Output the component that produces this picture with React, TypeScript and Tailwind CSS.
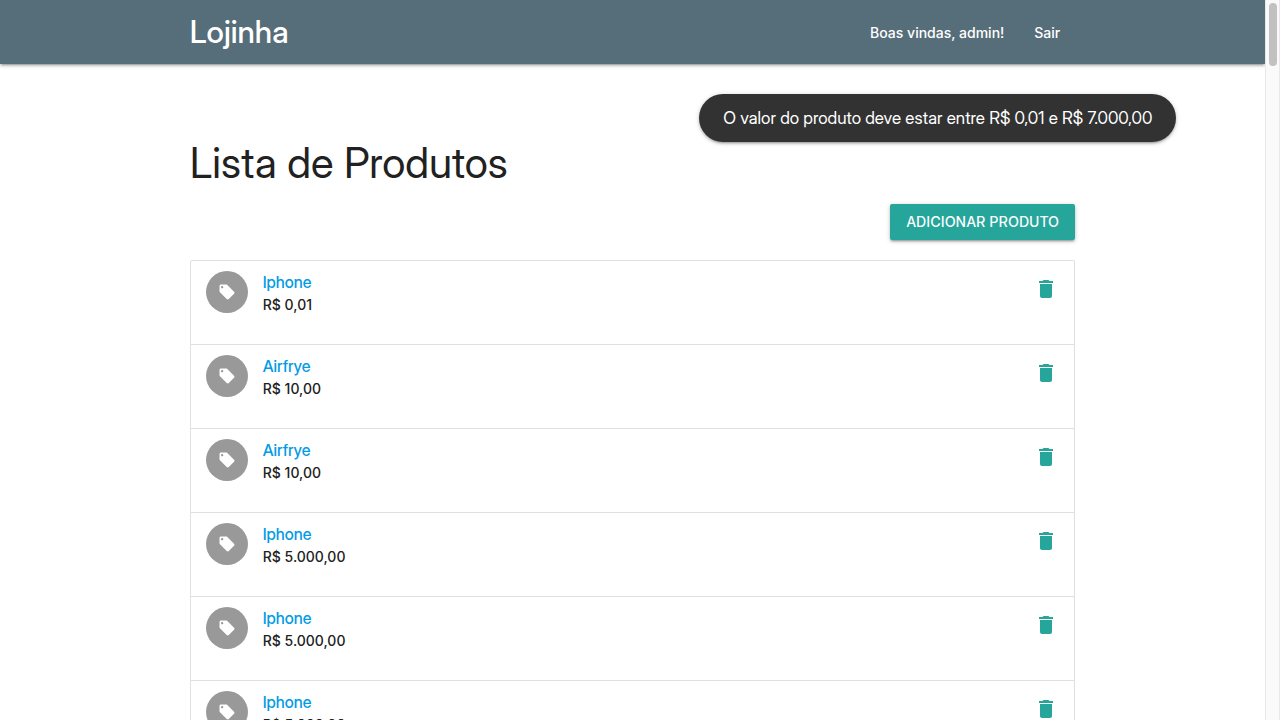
type Product = { name: string; price: string };

const products: Product[] = [
  { name: 'Iphone', price: 'R$ 0,01' },
  { name: 'Airfrye', price: 'R$ 10,00' },
  { name: 'Airfrye', price: 'R$ 10,00' },
  { name: 'Iphone', price: 'R$ 5.000,00' },
  { name: 'Iphone', price: 'R$ 5.000,00' },
  { name: 'Iphone', price: 'R$ 5.000,00' },
];

const textFont = "font-['Inter','Liberation_Sans',sans-serif]";

function TagIcon() {
  return (
    <svg viewBox="0 0 24 24" className="size-[18px] fill-current" aria-hidden="true">
      <path d="M21.41 11.58l-9-9C12.05 2.22 11.55 2 11 2H4c-1.1 0-2 .9-2 2v7c0 .55.22 1.05.59 1.42l9 9c.36.36.86.58 1.41.58.55 0 1.05-.22 1.41-.59l7-7c.37-.36.59-.86.59-1.41 0-.55-.23-1.06-.59-1.42zM5.5 7C4.67 7 4 6.33 4 5.5S4.67 4 5.5 4 7 4.67 7 5.5 6.33 7 5.5 7z" />
    </svg>
  );
}

function TrashIcon() {
  return (
    <svg viewBox="0 0 24 24" className="size-6 fill-current" aria-hidden="true">
      <path d="M6 19c0 1.1.9 2 2 2h8c1.1 0 2-.9 2-2V7H6v12zM19 4h-3.5l-1-1h-5l-1 1H5v2h14V4z" />
    </svg>
  );
}

function ProductRow({ name, price }: Product) {
  return (
    <li className="flex min-h-[84px] items-start border-b border-[#e0e0e0] py-2.5 pr-4 pl-[15px]">
      <span className="flex size-[42px] shrink-0 items-center justify-center rounded-full bg-[#999999] text-white">
        <TagIcon />
      </span>
      <div className="ml-[15px] flex-1">
        <a href="#produto" className="block text-base leading-[22px] font-medium text-[#039be5]">{name}</a>
        <p className={`text-sm leading-6 font-medium ${textFont}`}>{price}</p>
      </div>
      <button type="button" aria-label="Remover produto" className="mt-1.5 text-[#26a69a]">
        <TrashIcon />
      </button>
    </li>
  );
}

const raised =
  'shadow-[0_2px_2px_0_rgba(0,0,0,0.14),0_3px_1px_-2px_rgba(0,0,0,0.12),0_1px_5px_0_rgba(0,0,0,0.2)]';

export default function App() {
  return (
    <div className="flex h-screen overflow-hidden bg-white font-['Inter_Display','Inter','Liberation_Sans',sans-serif] text-[#212121]">
      <div className="relative min-w-0 flex-1 overflow-hidden">
        <nav className={`bg-[#566e79] text-white ${raised}`}>
          <div className="mx-auto flex h-16 w-[70%] items-center justify-between">
            <a href="#inicio" className="text-[31px] leading-8 font-medium">Lojinha</a>
            <ul className={`flex pt-px text-sm leading-6 font-medium ${textFont}`}>
              <li><a href="#perfil" className="px-[15px]">Boas vindas, admin!</a></li>
              <li><a href="#sair" className="px-[15px]">Sair</a></li>
            </ul>
          </div>
        </nav>

        <main className="mx-auto w-[70%] pt-[75px]">
          <h1 className="text-[42px] leading-[48px]">Lista de Produtos</h1>
          <div className="mt-[17px] flex justify-end">
            <button
              type="button"
              className={`h-9 rounded-xs bg-[#26a69a] px-4 text-sm font-medium tracking-[0.5px] text-white uppercase ${raised}`}
            >
              Adicionar produto
            </button>
          </div>
          <ul className="mt-5 rounded-xs border border-[#e0e0e0]">
            {products.map((product, index) => (
              <ProductRow key={index} {...product} />
            ))}
          </ul>
        </main>

        <div
          role="status"
          className={`absolute top-[94px] right-[7%] flex min-h-12 items-center rounded-3xl bg-[#323232] px-6 text-[17px] leading-6 text-white ${raised}`}
        >
          O valor do produto deve estar entre R$ 0,01 e R$ 7.000,00
        </div>
      </div>

      <div className="w-[15px] shrink-0 border-x border-[#e8e8e8] bg-[#fafafa] px-0.5 pt-[3px]" aria-hidden="true">
        <div className="mx-auto h-[63px] w-2 rounded-full bg-[#c1c1c1]" />
      </div>
    </div>
  );
}
